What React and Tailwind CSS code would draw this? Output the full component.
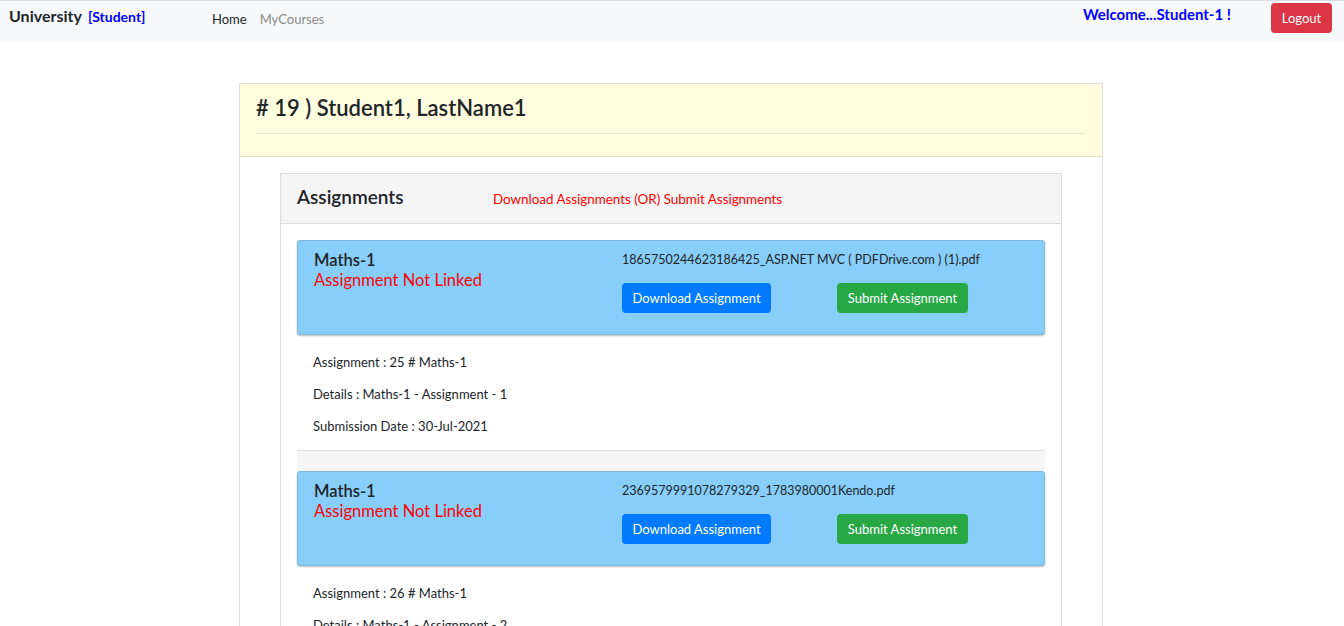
const assignments = [
  {
    id: 25,
    course: "Maths-1",
    file: "1865750244623186425_ASP.NET MVC ( PDFDrive.com ) (1).pdf",
    details: "Maths-1 - Assignment - 1",
    date: "30-Jul-2021",
  },
  {
    id: 26,
    course: "Maths-1",
    file: "2369579991078279329_1783980001Kendo.pdf",
    details: "Maths-1 - Assignment - 2",
    date: "06-Aug-2021",
  },
];

function AssignmentItem({ a }) {
  return (
    <div>
      <div className="bg-[#87cefa] border border-[#7fb9de] rounded-[3px] shadow-[0_1px_2px_rgba(0,0,0,0.25)] h-[95px] px-4 pt-[9px] flex">
        <div className="w-[308px] shrink-0">
          <div className="text-[16.5px] leading-[20px] font-semibold text-[#212529]">{a.course}</div>
          <div className="text-[16.5px] leading-[20px] text-[#ff0000]">Assignment Not Linked</div>
        </div>
        <div>
          <div className="text-[12.5px] leading-[20px] text-[#212529]">{a.file}</div>
          <div className="flex mt-[13px]">
            <button className="bg-[#007bff] text-white text-[13px] rounded-[4px] h-[30px] w-[149px] pt-[1px]">
              Download Assignment
            </button>
            <button className="bg-[#28a745] text-white text-[13px] rounded-[4px] h-[30px] w-[131px] ml-[66px] pt-[1px]">
              Submit Assignment
            </button>
          </div>
        </div>
      </div>
      <div className="px-4 pt-[17px] pb-[2px] text-[13px] text-[#212529]">
        <p className="leading-[20px] mb-3">Assignment : {a.id} # {a.course}</p>
        <p className="leading-[20px] mb-3">Details : {a.details}</p>
        <p className="leading-[20px] mb-3">Submission Date : {a.date}</p>
      </div>
      <div className="border-t border-[#dcdcdc] bg-[#f5f5f5] h-[21px]" />
    </div>
  );
}

export default function App() {
  return (
    <div className="min-h-screen bg-white font-['Lato','Noto_Sans',sans-serif] text-[#212529]">
      <nav className="h-[42px] bg-[#f8f9fa] border-t border-[#dadde0] flex items-start">
        <div className="pl-[9px] pt-[3px] flex items-baseline gap-[6px] w-[212px]">
          <span className="text-[16px] font-bold text-[#212529]">University</span>
          <span className="text-[14px] font-bold text-[#0000ff]">[Student]</span>
        </div>
        <div className="pt-[9px] flex gap-[13px] text-[13px]">
          <span className="text-[#212529]">Home</span>
          <span className="text-[#8a8a8a]">MyCourses</span>
        </div>
        <div className="ml-auto pt-[2px] text-[15px] font-bold text-[#0000ff]">Welcome...Student-1 !</div>
        <button className="ml-[40px] mr-[12px] mt-[2px] bg-[#dc3545] text-white text-[13px] rounded-[4px] h-[30px] w-[61px] pt-[2px]">
          Logout
        </button>
      </nav>

      <div className="w-[864px] mt-[41px] border border-[#dfdfdf] border-b-0 ml-[239px]">
        <div className="bg-[#ffffe0] px-4 pt-[10px] pb-[22px] border-b border-[#e3e3c8]">
          <h4 className="text-[22px] leading-[28px] font-semibold text-[#212529] pb-[11px] border-b border-[#e5e5cf]">
            # 19 ) Student1, LastName1
          </h4>
        </div>
        <div className="px-[40px] pt-4">
          <div className="border border-[#dcdcdc] border-b-0">
            <div className="bg-[#f5f5f5] h-[50px] px-4 flex items-center border-b border-[#dcdcdc]">
              <span className="text-[19px] font-semibold text-[#212529] w-[196px] -mt-[2px]">Assignments</span>
              <span className="text-[13.4px] text-[#ff0000] mt-[2px]">Download Assignments (OR) Submit Assignments</span>
            </div>
            <div className="px-4 pt-4">
              {assignments.map((a) => (
                <AssignmentItem key={a.id} a={a} />
              ))}
            </div>
          </div>
        </div>
      </div>
    </div>
  );
}
